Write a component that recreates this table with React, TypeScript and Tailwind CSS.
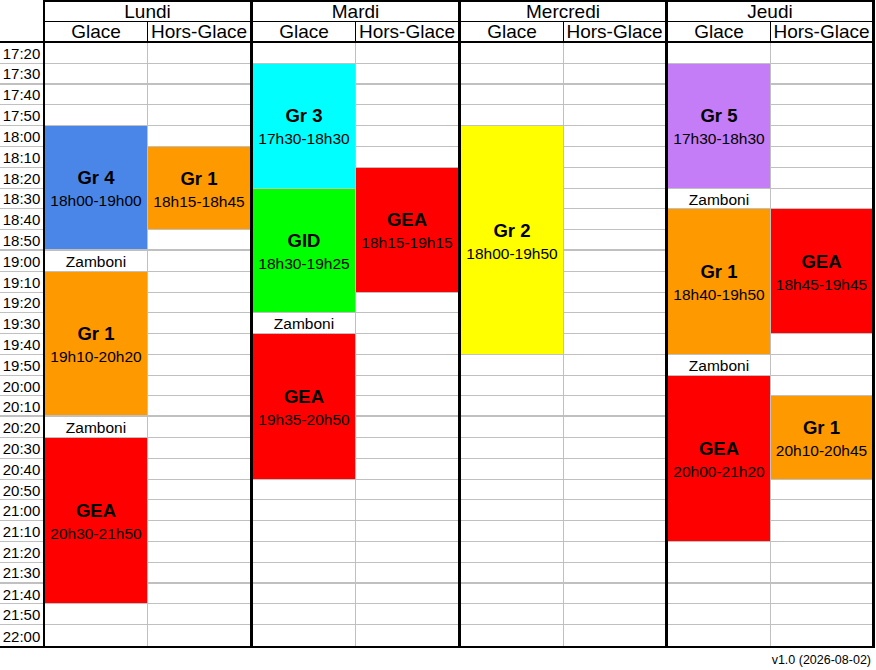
import React from "react";

type Seg = {
  start: number;
  span: number;
  title?: string;
  time?: string;
  color?: string;
  zamboni?: boolean;
};

const ROWS = 29;
const THICK = new Set([1, 9, 17, 25]);

const TIMES = Array.from({ length: ROWS }, (_, i) => {
  const m = 17 * 60 + 20 + i * 10;
  return `${Math.floor(m / 60)}:${String(m % 60).padStart(2, "0")}`;
});

const BLUE = "bg-[#4a86e8]";
const ORANGE = "bg-[#ff9900]";
const RED = "bg-[#ff0000]";
const CYAN = "bg-[#00ffff]";
const GREEN = "bg-[#00ff00]";
const YELLOW = "bg-[#ffff00]";
const PURPLE = "bg-[#c47cf7]";

type Day = {
  name: string;
  width: string;
  horsWidth: string;
  glace: Seg[];
  hors: Seg[];
};

const DAYS: Day[] = [
  {
    name: "Lundi",
    width: "w-[208px]",
    horsWidth: "w-[102px]",
    glace: [
      { start: 4, span: 6, title: "Gr 4", time: "18h00-19h00", color: BLUE },
      { start: 10, span: 1, zamboni: true },
      { start: 11, span: 7, title: "Gr 1", time: "19h10-20h20", color: ORANGE },
      { start: 18, span: 1, zamboni: true },
      { start: 19, span: 8, title: "GEA", time: "20h30-21h50", color: RED },
    ],
    hors: [{ start: 5, span: 4, title: "Gr 1", time: "18h15-18h45", color: ORANGE }],
  },
  {
    name: "Mardi",
    width: "w-[208px]",
    horsWidth: "w-[102px]",
    glace: [
      { start: 1, span: 6, title: "Gr 3", time: "17h30-18h30", color: CYAN },
      { start: 7, span: 6, title: "GID", time: "18h30-19h25", color: GREEN },
      { start: 13, span: 1, zamboni: true },
      { start: 14, span: 7, title: "GEA", time: "19h35-20h50", color: RED },
    ],
    hors: [{ start: 6, span: 6, title: "GEA", time: "18h15-19h15", color: RED }],
  },
  {
    name: "Mercredi",
    width: "w-[207px]",
    horsWidth: "w-[101px]",
    glace: [{ start: 4, span: 11, title: "Gr 2", time: "18h00-19h50", color: YELLOW }],
    hors: [],
  },
  {
    name: "Jeudi",
    width: "w-[207px]",
    horsWidth: "w-[101px]",
    glace: [
      { start: 1, span: 6, title: "Gr 5", time: "17h30-18h30", color: PURPLE },
      { start: 7, span: 1, zamboni: true },
      { start: 8, span: 7, title: "Gr 1", time: "18h40-19h50", color: ORANGE },
      { start: 15, span: 1, zamboni: true },
      { start: 16, span: 8, title: "GEA", time: "20h00-21h20", color: RED },
    ],
    hors: [
      { start: 8, span: 6, title: "GEA", time: "18h45-19h45", color: RED },
      { start: 17, span: 4, title: "Gr 1", time: "20h10-20h45", color: ORANGE },
    ],
  },
];

function fill(segs: Seg[]): Seg[] {
  const out: Seg[] = [];
  let r = 0;
  while (r < ROWS) {
    const s = segs.find((x) => x.start === r);
    if (s) {
      out.push(s);
      r += s.span;
    } else {
      out.push({ start: r, span: 1 });
      r += 1;
    }
  }
  return out;
}

function bottomClass(end: number): string {
  if (end === ROWS - 1) return "";
  if (THICK.has(end)) return "border-b-2";
  return "border-b";
}

function Column({ segs, divider }: { segs: Seg[]; divider: boolean }) {
  return (
    <div className="grid h-full grid-rows-[repeat(29,minmax(0,1fr))]">
      {fill(segs).map((s) => {
        const end = s.start + s.span - 1;
        const cls = [
          "border-[#c0c0c0] min-h-0 overflow-hidden",
          bottomClass(end),
          divider ? "border-r" : "",
          s.color ?? "bg-white",
        ].join(" ");
        return (
          <div key={s.start} className={cls} style={{ gridRow: `span ${s.span}` }}>
            {s.title ? (
              <div className="flex h-full flex-col items-center justify-center pt-[5px] text-black">
                <div className="text-[18.5px] font-bold leading-[22px]">{s.title}</div>
                <div className="text-[15.5px] leading-[24px]">{s.time}</div>
              </div>
            ) : s.zamboni ? (
              <div className="flex h-full items-center justify-center pt-[2px] text-[15.5px] leading-none">
                Zamboni
              </div>
            ) : null}
          </div>
        );
      })}
    </div>
  );
}

export default function App() {
  return (
    <div className="h-[670px] w-[876px] overflow-hidden bg-white font-['Liberation_Sans',Arial,sans-serif] text-black">
      <div className="flex">
        <div className="flex w-[43px] shrink-0 flex-col">
          <div className="h-[43px] border-b-2 border-black" />
          <div className="grid h-[605px] grid-rows-[repeat(29,minmax(0,1fr))] border-b-2 border-black">
            {TIMES.map((t, i) => (
              <div
                key={t}
                className={`flex min-h-0 items-center justify-center border-[#c0c0c0] pt-[1px] text-[15px] leading-none ${bottomClass(i)}`}
              >
                {t}
              </div>
            ))}
          </div>
        </div>
        <div className="flex border-l-2 border-black">
          {DAYS.map((d) => (
            <div key={d.name} className={`flex shrink-0 flex-col border-r-[3px] border-black ${d.width}`}>
              <div className="flex h-[22px] items-start justify-center border-t-2 border-b border-black text-[19px] leading-[19px]">
                {d.name}
              </div>
              <div className="flex h-[21px] border-b-2 border-black text-[19px] leading-[19px]">
                <div className="w-[103px] shrink-0 border-r border-black text-center">Glace</div>
                <div className="flex-1 text-center">Hors-Glace</div>
              </div>
              <div className="flex h-[605px] border-b-2 border-black">
                <div className="h-full w-[103px] shrink-0">
                  <Column segs={d.glace} divider />
                </div>
                <div className={`h-full ${d.horsWidth}`}>
                  <Column segs={d.hors} divider={false} />
                </div>
              </div>
            </div>
          ))}
        </div>
      </div>
      <div className="mt-[4px] pr-[5px] text-right text-[12.5px] leading-[16px]">v1.0 (2026-08-02)</div>
    </div>
  );
}
